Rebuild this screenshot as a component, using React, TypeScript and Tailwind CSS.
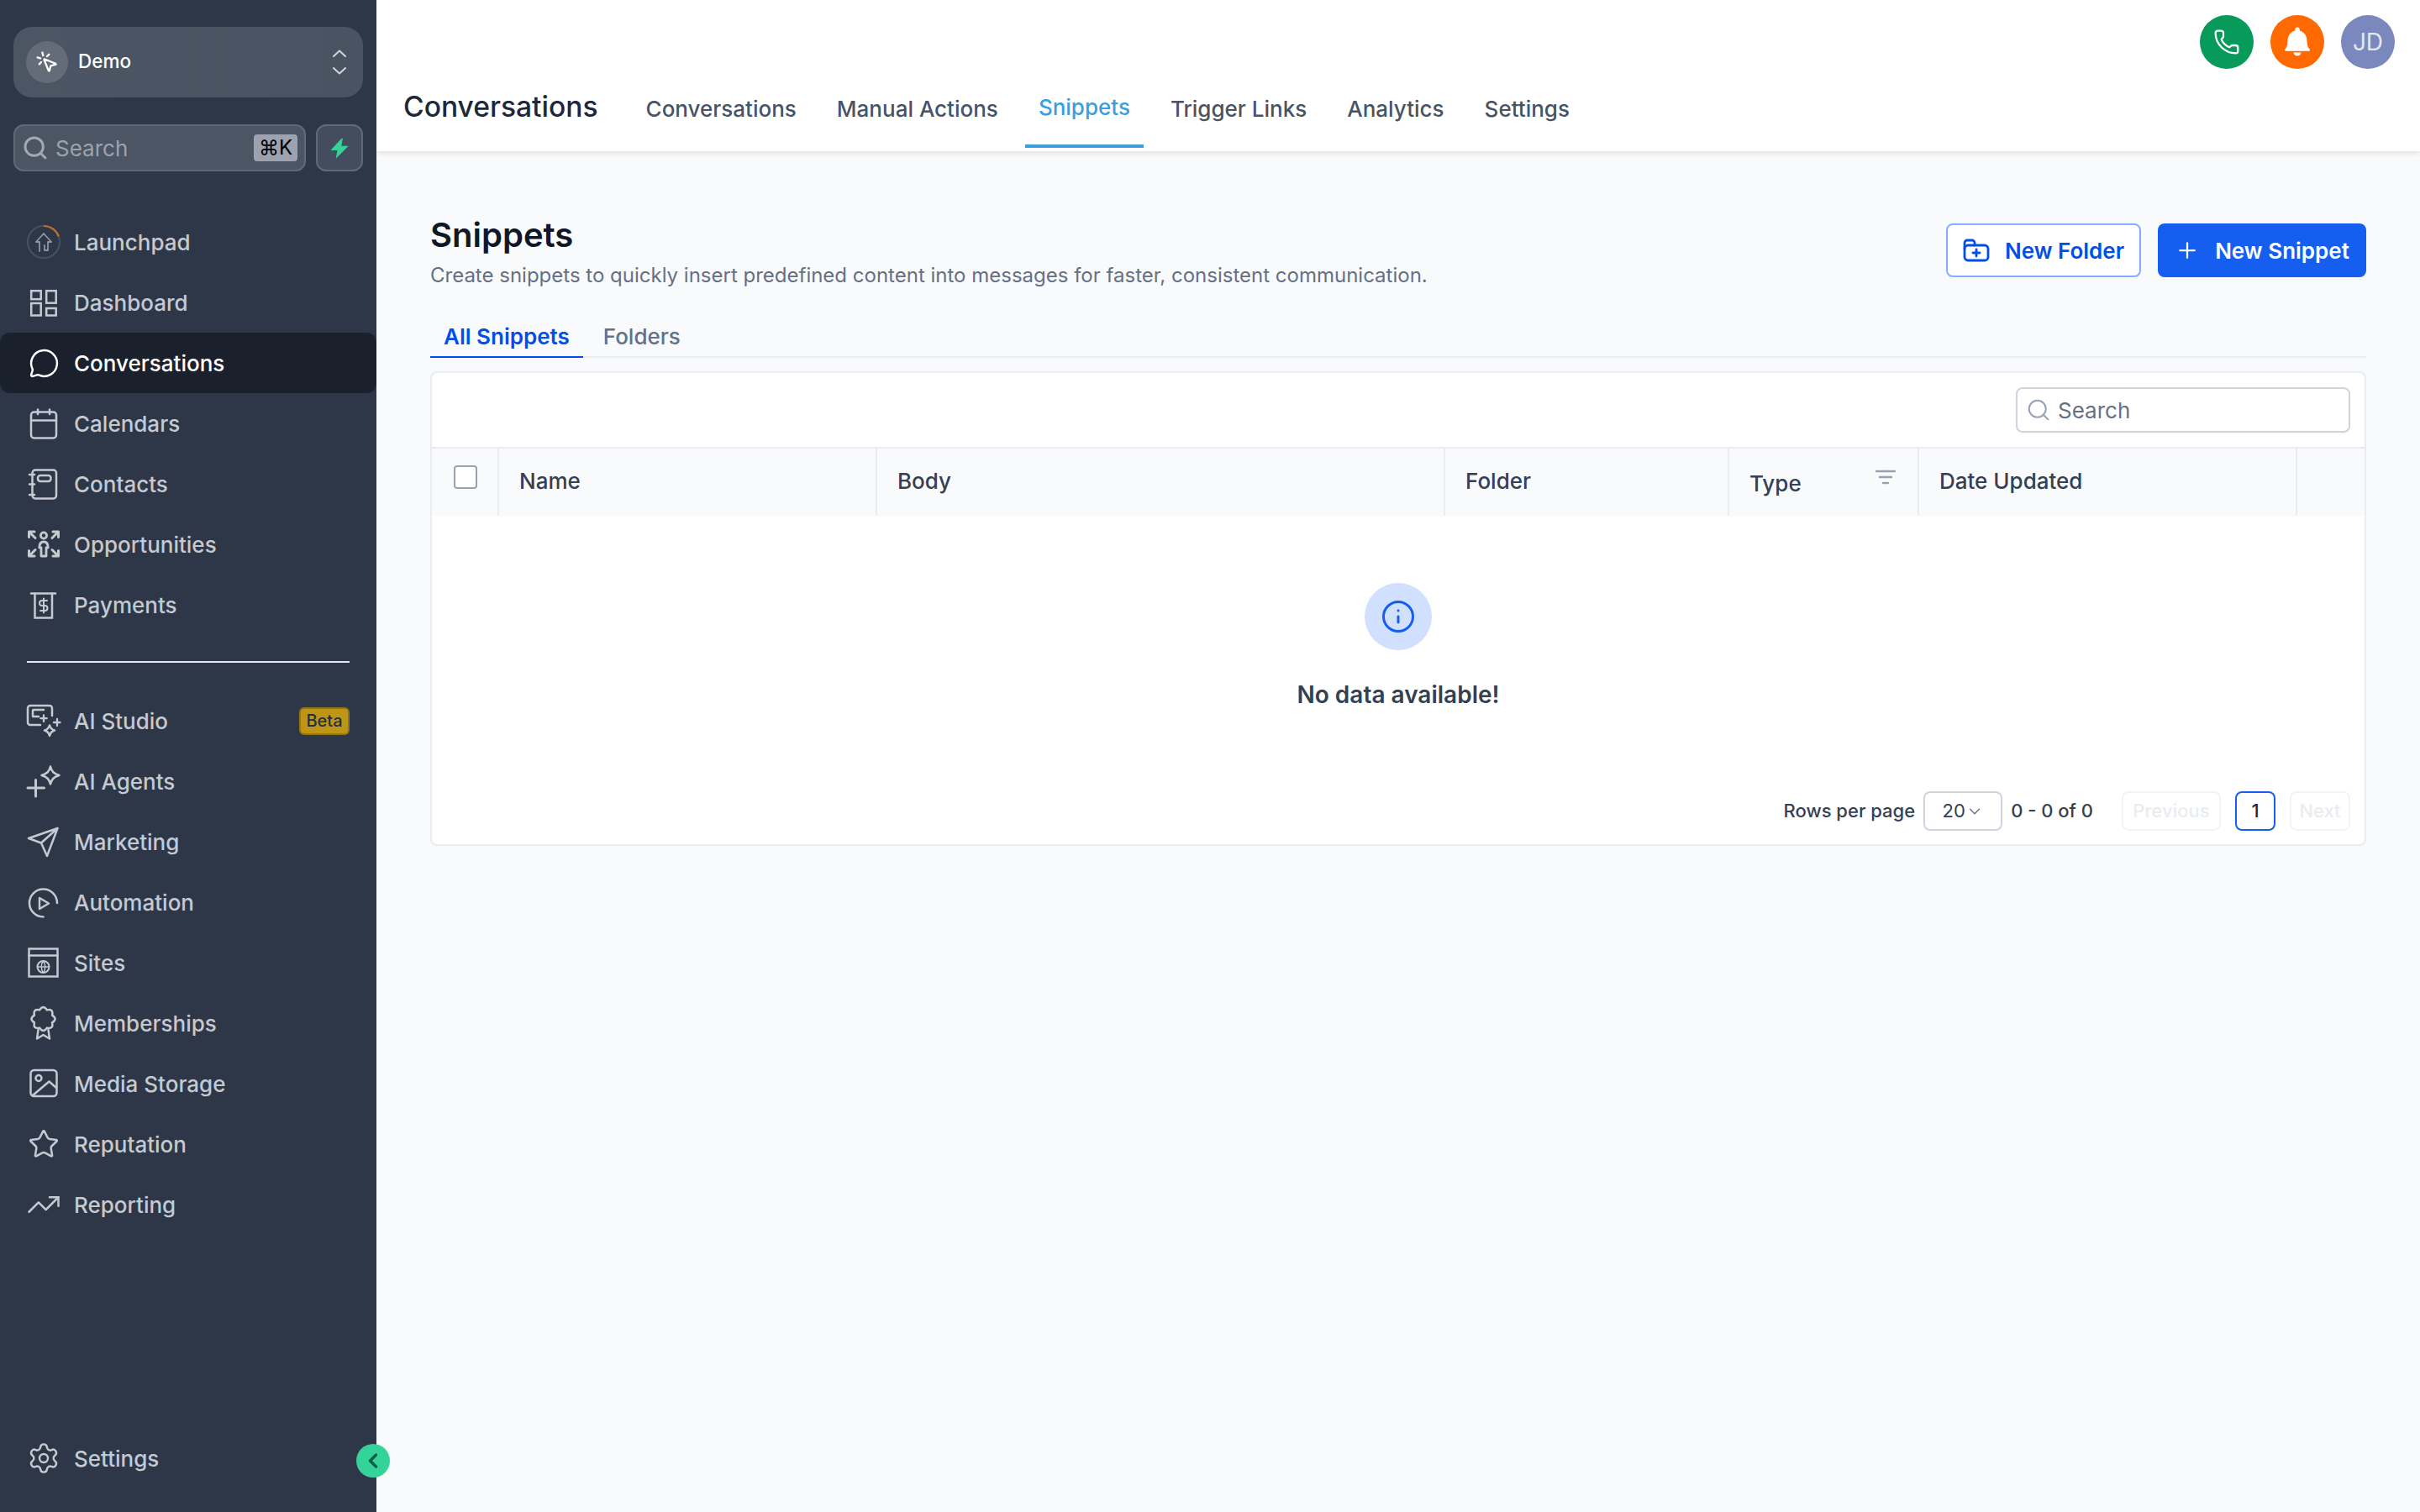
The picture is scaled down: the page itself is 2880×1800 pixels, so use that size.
import React from "react";
import {
  ChevronDown,
  ChevronLeft,
  Info,
  MessageCircle,
  MousePointerClick,
  Phone,
  Plus,
  Search,
  Settings,
  Star,
  TrendingUp,
} from "lucide-react";

// all nav icons share a 40x40 box so the text column lines up at x=88
const Ico = ({ children }: { children: React.ReactNode }) => (
  <svg
    viewBox="0 0 40 40"
    fill="none"
    stroke="currentColor"
    strokeWidth="2.5"
    strokeLinecap="round"
    strokeLinejoin="round"
    className="h-10 w-10 shrink-0 overflow-visible"
  >
    {children}
  </svg>
);

// scalloped rosette outline for the Memberships badge
const rosette = (() => {
  const cx = 19.5;
  const cy = 15;
  const n = 8;
  let d = "";
  for (let i = 0; i < n; i++) {
    const a = (i / n) * Math.PI * 2 + Math.PI / 8;
    const b = ((i + 0.5) / n) * Math.PI * 2 + Math.PI / 8;
    const c = ((i + 1) / n) * Math.PI * 2 + Math.PI / 8;
    const p = (t: number, r: number) =>
      `${(cx + Math.cos(t) * r).toFixed(1)} ${(cy + Math.sin(t) * r).toFixed(1)}`;
    if (i === 0) d += `M${p(a, 11.5)}`;
    d += `Q${p(b, 17.5)} ${p(c, 11.5)}`;
  }
  return d + "Z";
})();

const topNav = [
  {
    label: "Launchpad",
    icon: (
      <Ico>
        <circle cx="20" cy="20" r="19" stroke="#465063" strokeWidth="2.2" />
        <path d="M20 1A19 19 0 0 1 37.9 13.5" stroke="#b8702c" strokeWidth="2.2" strokeLinecap="butt" />
        <path d="M11 20L20 10L29 20H25V30H21V24M11 20H15V31" stroke="#8e95a3" strokeWidth="1.8" />
      </Ico>
    ),
  },
  {
    label: "Dashboard",
    icon: (
      <Ico>
        <rect x="5.2" y="6.2" width="11.5" height="10" strokeLinejoin="miter" />
        <rect x="23.2" y="6.2" width="11.5" height="14.5" strokeLinejoin="miter" />
        <rect x="5.2" y="21" width="11.5" height="14.5" strokeLinejoin="miter" />
        <rect x="23.2" y="27" width="11.5" height="8.5" strokeLinejoin="miter" />
      </Ico>
    ),
  },
  {
    label: "Conversations",
    active: true,
    icon: <MessageCircle size={37} strokeWidth={1.6} className="mx-[1.5px] shrink-0" />,
  },
  {
    label: "Calendars",
    icon: (
      <Ico>
        <rect x="5" y="6.5" width="30" height="31" rx="3.5" />
        <path d="M13 3.5V9M27 3.5V9M5 16.5H35" />
      </Ico>
    ),
  },
  {
    label: "Contacts",
    icon: (
      <Ico>
        <rect x="6.5" y="3.5" width="28.5" height="34" rx="3.5" />
        <rect x="13" y="10" width="15.5" height="7" rx="3" />
        <path d="M3 9H9M3 20.5H9M3 33H9" />
      </Ico>
    ),
  },
  {
    label: "Opportunities",
    icon: (
      <Ico>
        <circle cx="20" cy="9.500" r="3.600" strokeWidth="2.800" />
        <path d="M14.800 24c0-4.500 2-7 5.200-7s5.200 2.500 5.200 7h-2.200v10h-6v-10z" strokeWidth="2.800" />
        <path d="M2.500 5H9M2.500 5V11.500M2.500 5L10 12.500M37.500 5H31M37.500 5V11.500M37.500 5L30 12.500M2.500 34H9M2.500 34V27.500M2.500 34L10 26.500M37.500 34H31M37.500 34V27.500M37.500 34L30 26.500" strokeWidth="3" />
      </Ico>
    ),
  },
  {
    label: "Payments",
    icon: (
      <Ico>
        <path d="M5 6.500H34" />
        <path d="M9.500 6.500V35.500H30V6.500" strokeLinejoin="miter" />
        <path d="M24 15H18a3 3 0 0 0 0 6h3.500a3 3 0 0 1 0 6H16M20 12.500V29.500" strokeWidth="2" />
      </Ico>
    ),
  },
];

const bottomNav = [
  {
    label: "AI Studio",
    badge: "Beta",
    icon: (
      <Ico>
        <path d="M16 25H4a3 3 0 0 1-3-3V5a3 3 0 0 1 3-3H27a3 3 0 0 1 3 3V14" />
        <path d="M20 7H8a1 1 0 0 0-1 1V15H14" />
        <path d="M20 13.500V21M16.300 17.200H23.700M36 18V26M32 22H39.500" strokeWidth="2.300" />
        <path d="M27 25.500C28 29 29.500 30.500 33 31.500C29.500 32.500 28 34 27 38C26 34 24.500 32.500 21 31.500C24.500 30.500 26 29 27 25.500Z" />
      </Ico>
    ),
  },
  {
    label: "AI Agents",
    icon: (
      <Ico>
        <path d="M10.500 18.500V38M1 28H20.500" strokeWidth="3" />
        <path d="M28 2.500C29.500 8.500 32 11 38.500 13C32 15 29.500 17.500 28 23.500C26.500 17.500 24 15 17.500 13C24 11 26.500 8.500 28 2.500Z" />
      </Ico>
    ),
  },
  {
    label: "Marketing",
    icon: (
      <Ico>
        <path d="M36.500 4L2 16L17 21.500L24 37ZM36.500 4L17 21.500" />
      </Ico>
    ),
  },
  {
    label: "Automation",
    icon: (
      <Ico>
        <path d="M36 21A16.500 16.500 0 1 0 19.500 37.500" />
        <path d="M15 15L26 21.500L15 28Z" />
      </Ico>
    ),
  },
  {
    label: "Sites",
    icon: (
      <Ico>
        <rect x="2.500" y="3.500" width="34" height="33" strokeLinejoin="miter" />
        <path d="M2.500 11.500H36.500" />
        <circle cx="19.500" cy="25" r="7" strokeWidth="2" />
        <path d="M12.500 25H26.500M19.500 18C16.500 22 16.500 28 19.500 32C22.500 28 22.500 22 19.500 18Z" strokeWidth="1.500" />
      </Ico>
    ),
  },
  {
    label: "Memberships",
    icon: (
      <Ico>
        <path d={rosette} />
        <path d="M13.500 28L12 38.500L19.500 34L27 38.500L25.500 28" />
      </Ico>
    ),
  },
  {
    label: "Media Storage",
    icon: (
      <Ico>
        <rect x="4.500" y="4" width="31" height="31" rx="4" />
        <circle cx="14" cy="13.500" r="3.500" />
        <path d="M7 34L26.500 17.500L35 25" />
      </Ico>
    ),
  },
  {
    label: "Reputation",
    icon: <Star size={38} strokeWidth={1.6} className="mx-[1px] shrink-0" />,
  },
  {
    label: "Reporting",
    icon: <TrendingUp size={42} strokeWidth={1.45} className="-mx-[1px] shrink-0" />,
  },
];

type NavItemProps = {
  label: string;
  icon: React.ReactNode;
  active?: boolean;
  badge?: string;
};

const NavItem = ({ label, icon, active, badge }: NavItemProps) => (
  <div
    className={`flex h-[72px] items-center gap-4 rounded-xl pl-8 pr-8 text-[26px] font-medium ${
      active ? "bg-[#1a202c] text-white" : "text-[#c5c9d0]"
    }`}
  >
    {icon}
    <span className="flex-1">{label}</span>
    {badge && (
      <span className="flex h-[33px] w-[60px] items-center justify-center rounded-[6px] border-2 border-[#94761a] bg-[#bf9516] text-[20px] text-[#1e3048]">
        {badge}
      </span>
    )}
  </div>
);

const Sidebar = () => (
  <aside className="relative flex h-[1800px] w-[448px] shrink-0 flex-col bg-[#2d3748]">
    <div className="mx-4 mt-8 flex h-[84px] items-center rounded-[22px] bg-gradient-to-r from-[#4b5563] to-[#4a5361] pl-[15px] pr-5">
      <div className="flex h-[50px] w-[50px] items-center justify-center rounded-full bg-[#646c79]">
        <MousePointerClick size={28} strokeWidth={2} className="text-white" />
      </div>
      <span className="-mt-[2px] ml-3 flex-1 text-[22.500px] font-medium text-white">Demo</span>
      <svg viewBox="0 0 16 30" fill="none" stroke="#d1d5db" strokeWidth="2" strokeLinecap="round" strokeLinejoin="round" className="h-[30px] w-4">
        <path d="M1 8L8 1.500L15 8M1 22L8 28.500L15 22" />
      </svg>
    </div>

    <div className="mx-4 mt-8 flex h-14 gap-3">
      <div className="flex flex-1 items-center rounded-xl border-2 border-[#5f6978] bg-[#4b5563] pl-2 pr-2 text-[26px] text-[#9ca3af]">
        <Search size={32} strokeWidth={2.2} className="text-[#a3a9b4]" />
        <span className="ml-2 flex-1">Search</span>
        <span className="flex h-8 w-[52px] items-center justify-center rounded bg-[#9ca3af] text-[24px] leading-none text-black">
          ⌘K
        </span>
      </div>
      <div className="flex w-14 items-center justify-center rounded-xl border-2 border-[#5f6978] bg-[#434d5d]">
        <svg viewBox="0 0 22 25" className="h-[25px] w-[22px] fill-[#34d399]">
          <path d="M13.500 0.800L1 14.200Q0.400 15 1.400 15H8.500L6.800 23.800Q6.700 24.800 7.600 24L21 10.500Q21.600 9.700 20.600 9.700H13.300L14.800 1.300Q14.800 0 13.500 0.800Z" />
        </svg>
      </div>
    </div>

    <nav className="mt-12">
      {topNav.map((item) => (
        <NavItem key={item.label} {...item} />
      ))}
    </nav>

    <div className="mx-8 mt-[31px] h-[2px] bg-[#e5e7eb]" />

    <nav className="mt-[33px]">
      {bottomNav.map((item) => (
        <NavItem key={item.label} {...item} />
      ))}
    </nav>

    <div className="mt-auto mb-7">
      <NavItem label="Settings" icon={<Settings size={40} strokeWidth={1.45} className="shrink-0" />} />
    </div>

    <button className="absolute -right-4 bottom-[41px] z-10 flex h-10 w-10 items-center justify-center rounded-full bg-[#34d399] text-[#065f46]">
      <ChevronLeft size={28} strokeWidth={3} />
    </button>
  </aside>
);

const tabs = ["Conversations", "Manual Actions", "Snippets", "Trigger Links", "Analytics", "Settings"];

const TopBar = () => (
  <header className="h-[180px] bg-white shadow-[0_2px_6px_rgba(16,24,40,0.12)]">
    <div className="flex justify-end gap-5 pr-[30px] pt-[18px]">
      <div className="flex h-16 w-16 items-center justify-center rounded-full bg-[#079a5a] text-white">
        <Phone size={32} strokeWidth={1.7} />
      </div>
      <div className="flex h-16 w-16 items-center justify-center rounded-full bg-[#ff6900]">
        <svg viewBox="0 0 64 64" className="h-16 w-16 fill-white">
          <path d="M32 14.500a2.800 2.800 0 0 1 2.800 2.800v1.200C41 20.300 43.500 25.500 43.500 31c0 4.500 1 7.500 3 9.500a1.200 1.200 0 0 1-.8 2.200H18.300a1.200 1.200 0 0 1-.8-2.200c2-2 3-5 3-9.500 0-5.500 2.500-10.700 8.700-12.500v-1.200A2.800 2.800 0 0 1 32 14.500Z" />
          <path d="M27.500 44.500h9a4.500 4 0 0 1-9 0Z" />
        </svg>
      </div>
      <div className="flex h-16 w-16 items-center justify-center rounded-full bg-[#7b88bd] text-[28px] text-[#e6e8f0]">
        JD
      </div>
    </div>
    <div className="mt-[14px] flex items-start pl-8">
      <h2 className="mt-[11px] mr-[41px] text-[33.600px] font-medium leading-10 text-[#1d2939]">Conversations</h2>
      <div className="flex gap-4">
        {tabs.map((tab) =>
          tab === "Snippets" ? (
            <div key={tab} className="h-20 border-b-4 border-[#3a9fdc] px-4 pt-3 text-[26px] font-medium leading-10 text-[#3a9fdc]">
              {tab}
            </div>
          ) : (
            <div key={tab} className="h-20 px-4 pt-[14px] text-[26px] font-medium leading-10 text-[#475467]">
              {tab}
            </div>
          )
        )}
      </div>
    </div>
  </header>
);

const columns = [
  { label: "Name", width: "w-[450px]" },
  { label: "Body", width: "w-[676px]" },
  { label: "Folder", width: "w-[338px]" },
];

const pagerBox = "flex h-[47px] items-center justify-center rounded-lg border-2";

const SnippetsTable = () => (
  <div className="mt-4 overflow-hidden rounded-lg border-2 border-[#eaecf0] bg-white">
    <div className="flex h-[90px] items-center justify-end border-b-2 border-[#eaecf0] pr-[17px]">
      <div className="flex h-[54px] w-[398px] items-center rounded-lg border-2 border-[#d0d5dd] bg-white pl-[10px] text-[26px] text-[#667085] shadow-[0_1px_2px_rgba(16,24,40,0.05)]">
        <Search size={30} strokeWidth={1.6} className="text-[#98a2b3]" />
        <span className="ml-2">Search</span>
      </div>
    </div>

    <div className="flex h-20 bg-[#f9fafb] text-[26px] font-medium text-[#344054]">
      <div className="w-20 border-r-2 border-[#eaecf0] pl-[26px] pt-5">
        <div className="h-7 w-7 rounded border-2 border-[#98a2b3] bg-white" />
      </div>
      {columns.map((col) => (
        <div key={col.label} className={`${col.width} flex items-center border-r-2 border-[#eaecf0] pb-1 pl-6`}>
          {col.label}
        </div>
      ))}
      <div className="flex w-[226px] items-center justify-between border-r-2 border-[#eaecf0] pl-6 pr-[26px]">
        <span className="pt-[2px]">Type</span>
        <svg viewBox="0 0 24 18" fill="none" stroke="#98a2b3" strokeWidth="2.400" strokeLinecap="round" className="-mt-[12px] h-[18px] w-6">
          <path d="M1 2H23M5 9H19M9 16H15" />
        </svg>
      </div>
      <div className="flex w-[450px] items-center border-r-2 border-[#eaecf0] pb-1 pl-6">Date Updated</div>
      <div className="flex-1" />
    </div>

    <div className="flex flex-col items-center pt-20">
      <div className="flex h-20 w-20 items-center justify-center rounded-full bg-[#d1e0ff]">
        <Info size={42} strokeWidth={1.7} className="text-[#155eef]" />
      </div>
      <p className="mt-[33px] text-[28px] font-semibold leading-10 text-[#344054]">No data available!</p>
    </div>

    <div className="mt-[95px] mb-4 flex items-center justify-end pr-[17px] text-[22px] font-medium text-[#344054]">
      <span>Rows per page</span>
      <div className={`${pagerBox} ml-[10px] w-[94px] justify-between border-[#d0d5dd] px-4 font-normal`}>
        <span>20</span>
        <ChevronDown size={22} strokeWidth={1.5} className="text-[#667085]" />
      </div>
      <span className="ml-[10px]">0 - 0 of 0</span>
      <div className={`${pagerBox} ml-[34px] w-[118px] border-[#f2f4f7] text-[#eaecf0]`}>Previous</div>
      <div className={`${pagerBox} ml-[17px] w-12 border-[#155eef] text-[#1d2939]`}>1</div>
      <div className={`${pagerBox} ml-[17px] w-[72px] border-[#f2f4f7] text-[#eaecf0]`}>Next</div>
    </div>
  </div>
);

export default function App() {
  return (
    <div className="flex h-[1800px] w-[2880px] overflow-hidden font-['Inter',sans-serif]">
      <Sidebar />
      <main className="flex-1 bg-[#f9fafb]">
        <TopBar />
        <div className="px-16 pt-[76px]">
          <div className="flex items-start justify-between">
            <div>
              <h1 className="text-[40px] font-semibold leading-[48px] text-[#101828]">Snippets</h1>
              <p className="mt-[6px] text-[24px] leading-9 text-[#667085]">
                Create snippets to quickly insert predefined content into messages for faster, consistent communication.
              </p>
            </div>
            <div className="mt-[10px] flex gap-5">
              <button className="flex h-16 w-[232px] items-center justify-center gap-[18px] rounded-lg border-2 border-[#84adff] bg-white text-[26px] font-semibold text-[#004eeb]">
                <svg viewBox="0 0 32 28" fill="none" stroke="currentColor" strokeWidth="2.800" strokeLinecap="round" strokeLinejoin="round" className="h-7 w-8">
                  <rect x="2" y="8" width="28" height="18" rx="4" />
                  <path d="M2 12V5a3 3 0 0 1 3-3H11a3 3 0 0 1 3 3V8M16 13V21M12 17H20" />
                </svg>
                New Folder
              </button>
              <button className="flex h-16 w-[248px] items-center justify-center gap-[18px] rounded-lg bg-[#155eef] text-[26px] font-semibold text-white">
                <Plus size={30} strokeWidth={1.8} />
                New Snippet
              </button>
            </div>
          </div>

          <div className="mt-[35px] flex h-[45px] gap-6 border-b-2 border-[#eaecf0] text-[26px] font-medium leading-10">
            <div className="-mb-[2px] h-[45px] border-b-2 border-[#004eeb] px-4 font-semibold text-[#004eeb]">All Snippets</div>
            <div className="text-[#667085]">Folders</div>
          </div>

          <SnippetsTable />
        </div>
      </main>
    </div>
  );
}
